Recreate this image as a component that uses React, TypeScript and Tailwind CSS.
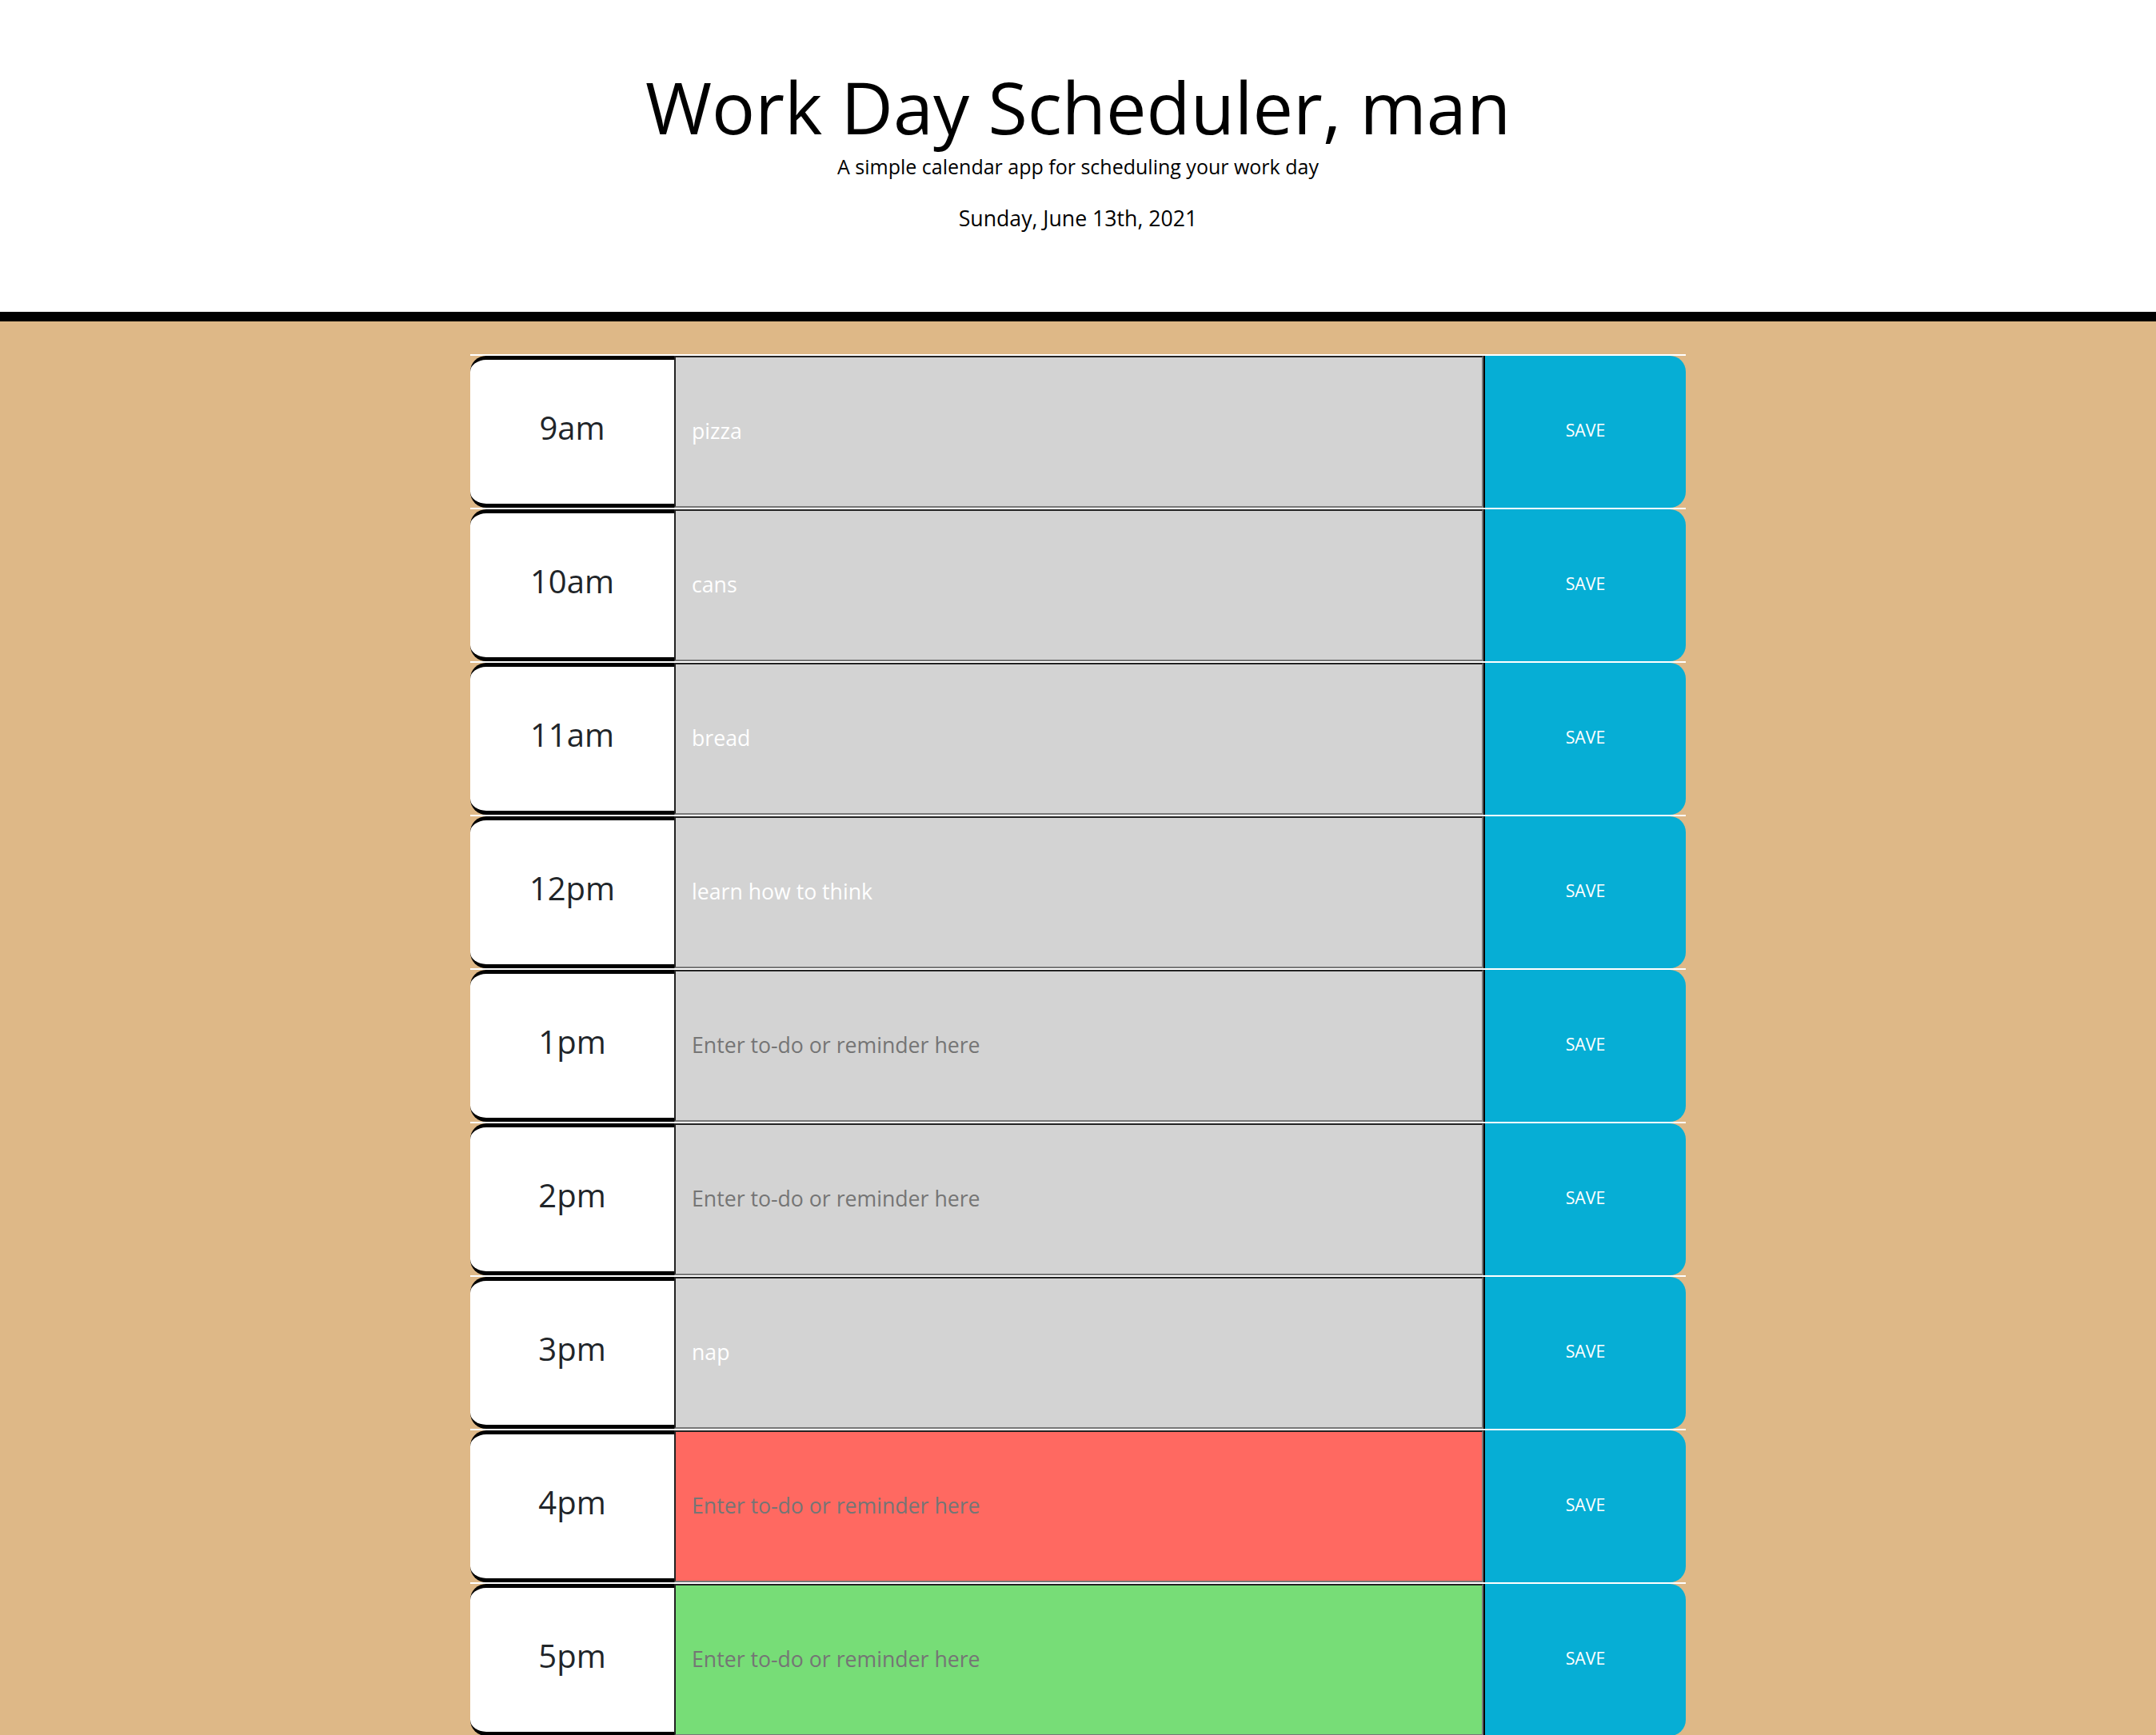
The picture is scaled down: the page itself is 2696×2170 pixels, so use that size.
import React from 'react';

type Slot = {
  hour: string;
  text: string;
  status: 'past' | 'present' | 'future';
};

const slots: Slot[] = [
  { hour: '9am', text: 'pizza', status: 'past' },
  { hour: '10am', text: 'cans', status: 'past' },
  { hour: '11am', text: 'bread', status: 'past' },
  { hour: '12pm', text: 'learn how to think', status: 'past' },
  { hour: '1pm', text: '', status: 'past' },
  { hour: '2pm', text: '', status: 'past' },
  { hour: '3pm', text: 'nap', status: 'past' },
  { hour: '4pm', text: '', status: 'present' },
  { hour: '5pm', text: '', status: 'future' },
];

const statusClass = {
  past: 'bg-[#d3d3d3]',
  present: 'bg-[#ff6961]',
  future: 'bg-[#77dd77]',
};

const TimeBlock = ({ slot }: { slot: Slot }) => {
  return (
    <div className="flex h-[192px] border-t-2 border-white">
      <div className="w-[255px] shrink-0 rounded-l-[20px] border-y-[5px] border-black bg-white pt-[65px] text-center text-[40px] leading-none text-[#212529]">
        {slot.hour}
      </div>
      <textarea
        className={`flex-1 resize-none border-2 border-t-[#222] border-l-[#222] border-b-[#777] border-r-[#777] pl-[20px] pt-[79px] text-[26.67px] leading-none text-white outline-none placeholder:text-[#757575] ${statusClass[slot.status]}`}
        defaultValue={slot.text}
        placeholder="Enter to-do or reminder here"
      />
      <button className="flex w-[253px] shrink-0 items-center justify-center rounded-r-[20px] border-l-2 border-black bg-[#06aed5] pb-[5px] text-[21.33px] leading-none text-white">
        SAVE
      </button>
    </div>
  );
};

const App = () => {
  return (
    <div className="min-h-screen bg-[#deb887] font-['Open_Sans',sans-serif]">
      <header className="border-b-[12px] border-black bg-white pt-[88px] pb-[103px] text-center text-black">
        <h1 className="text-[90px] font-normal leading-none">Work Day Scheduler, man</h1>
        <p className="mt-[18px] text-[25px] leading-none">A simple calendar app for scheduling your work day</p>
        <p className="mt-[39px] text-[26.67px] leading-none">Sunday, June 13th, 2021</p>
      </header>

      <main className="mx-auto mt-[41px] w-[1520px]">
        {slots.map((slot) => (
          <TimeBlock key={slot.hour} slot={slot} />
        ))}
      </main>
    </div>
  );
};

export default App;
